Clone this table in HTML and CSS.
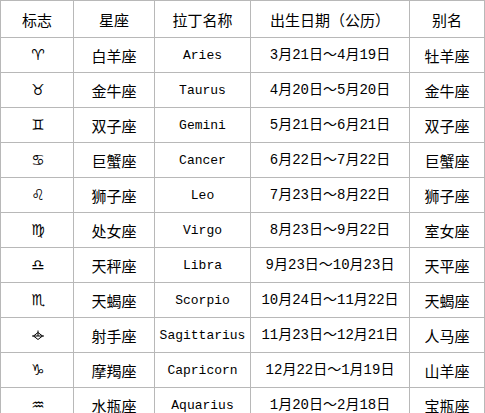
FILE: index.html
```html
<!DOCTYPE html>
<html lang="zh-CN">
<head>
<meta charset="utf-8">
<title>星座</title>
<link rel="stylesheet" href="styles.css">
</head>
<body>
<table class="zodiac">
  <colgroup>
    <col class="c1"><col class="c2"><col class="c3"><col class="c4"><col class="c5">
  </colgroup>
  <thead>
    <tr class="head">
      <th>标志</th><th>星座</th><th>拉丁名称</th><th>出生日期（公历）</th><th>别名</th>
    </tr>
  </thead>
  <tbody>
    <tr><td class="sym">&#x2648;&#xFE0E;</td><td>白羊座</td><td class="lat">Aries</td><td class="date">3月21日～4月19日</td><td>牡羊座</td></tr>
    <tr><td class="sym">&#x2649;&#xFE0E;</td><td>金牛座</td><td class="lat">Taurus</td><td class="date">4月20日～5月20日</td><td>金牛座</td></tr>
    <tr><td class="sym">&#x264A;&#xFE0E;</td><td>双子座</td><td class="lat">Gemini</td><td class="date">5月21日～6月21日</td><td>双子座</td></tr>
    <tr><td class="sym">&#x264B;&#xFE0E;</td><td>巨蟹座</td><td class="lat">Cancer</td><td class="date">6月22日～7月22日</td><td>巨蟹座</td></tr>
    <tr><td class="sym">&#x264C;&#xFE0E;</td><td>狮子座</td><td class="lat">Leo</td><td class="date">7月23日～8月22日</td><td>狮子座</td></tr>
    <tr><td class="sym">&#x264D;&#xFE0E;</td><td>处女座</td><td class="lat">Virgo</td><td class="date">8月23日～9月22日</td><td>室女座</td></tr>
    <tr><td class="sym">&#x264E;&#xFE0E;</td><td>天秤座</td><td class="lat">Libra</td><td class="date">9月23日～10月23日</td><td>天平座</td></tr>
    <tr><td class="sym">&#x264F;&#xFE0E;</td><td>天蝎座</td><td class="lat">Scorpio</td><td class="date">10月24日～11月22日</td><td>天蝎座</td></tr>
    <tr><td class="sym"><svg class="sag" width="14" height="13" viewBox="0 0 14 13" aria-label="射手座"><path d="M7 1.5 V7 M1 7 H13 M2.5 7 L7 3.5 L11.5 7 L7 10.5 Z" fill="none" stroke="#000" stroke-width="1"/></svg></td><td>射手座</td><td class="lat">Sagittarius</td><td class="date">11月23日～12月21日</td><td>人马座</td></tr>
    <tr><td class="sym">&#x2651;&#xFE0E;</td><td>摩羯座</td><td class="lat">Capricorn</td><td class="date">12月22日～1月19日</td><td>山羊座</td></tr>
    <tr><td class="sym">&#x2652;&#xFE0E;</td><td>水瓶座</td><td class="lat">Aquarius</td><td class="date">1月20日～2月18日</td><td>宝瓶座</td></tr>
  </tbody>
</table>
</body>
</html>
```
FILE: styles.css
```css
html, body {
  margin: 0;
  padding: 0;
  background: #ffffff;
}

.zodiac {
  border-collapse: collapse;
  table-layout: fixed;
  width: 484px;
  font-family: "Noto Sans CJK SC", sans-serif;
  font-size: 15px;
  color: #000000;
}

.c1 { width: 73px; }
.c2 { width: 81px; }
.c3 { width: 96px; }
.c4 { width: 159px; }
.c5 { width: 75px; }

.zodiac th,
.zodiac td {
  border: 1px solid #b8b8b8;
  padding: 0;
  text-align: center;
  vertical-align: middle;
  font-weight: normal;
  line-height: 1;
  white-space: nowrap;
}

.zodiac .head { height: 37px; }
.zodiac tbody tr { height: 35px; }

.zodiac .lat {
  font-family: "Liberation Mono", monospace;
  font-size: 13px;
}

.zodiac .date {
  font-family: "Liberation Mono", "Noto Sans CJK SC", monospace;
  font-size: 14px;
}

.zodiac .sym {
  font-family: "DejaVu Sans", sans-serif;
  font-size: 15px;
  padding-left: 2px;
}

.sag {
  display: inline-block;
  vertical-align: middle;
}
```
